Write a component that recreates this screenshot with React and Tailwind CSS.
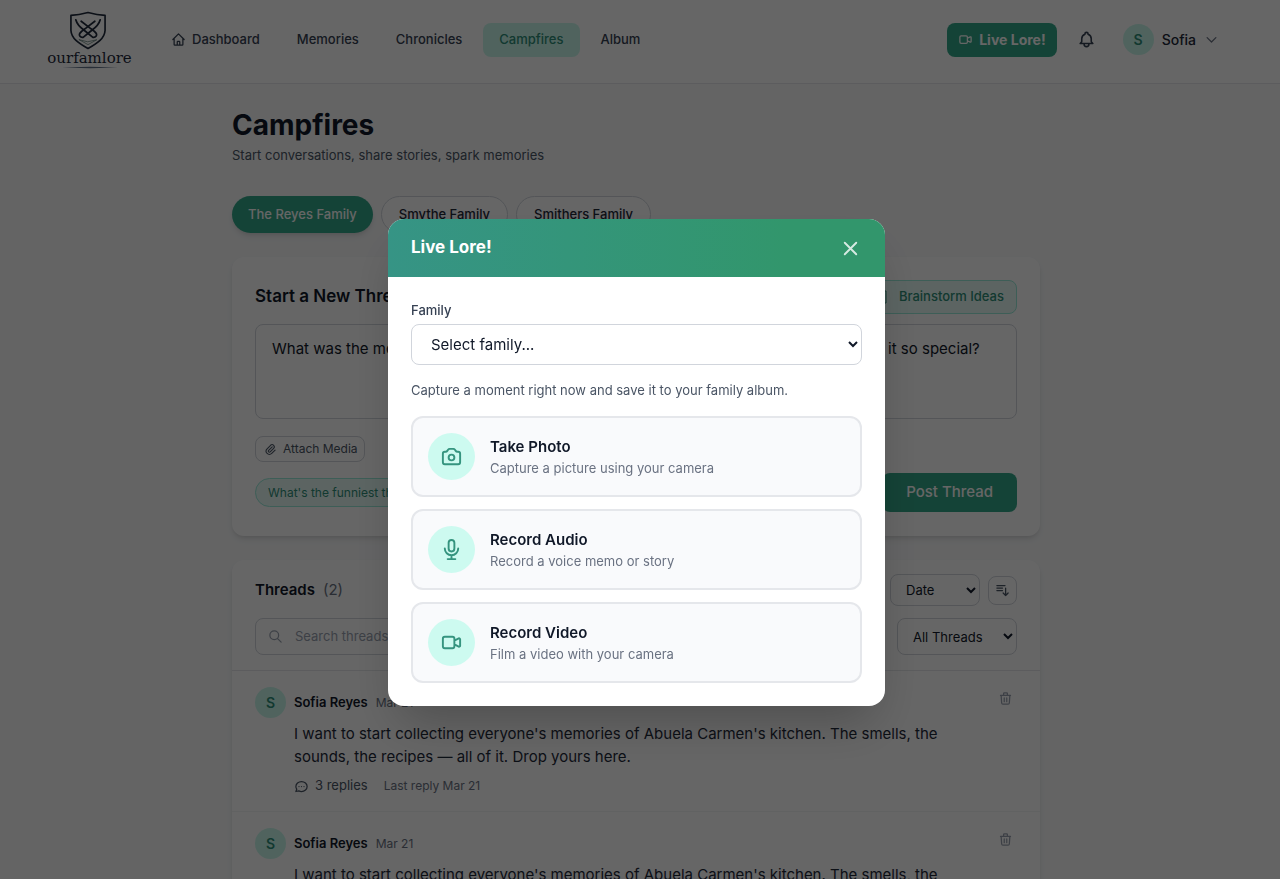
import {
  HiOutlineHome,
  HiOutlineVideoCamera,
  HiOutlineBell,
  HiOutlineChevronDown,
  HiOutlineX,
  HiOutlineCamera,
  HiOutlineMicrophone,
  HiOutlinePaperClip,
  HiOutlineSearch,
  HiOutlineSortDescending,
  HiOutlineTrash,
  HiOutlineChat,
} from "react-icons/hi";

function Logo() {
  return (
    <a href="#" className="flex w-[83px] flex-col items-center text-[#1e293b]">
      <svg viewBox="0 0 38 40" className="mr-1 h-[39px] w-[38px]" fill="none" stroke="currentColor" strokeWidth="1.7" strokeLinecap="round" strokeLinejoin="round" aria-hidden="true">
        <path d="M1.500 4.500C8 4 13 3 19 1.500C25 3 30 4 36.500 4.500V20C36 28 29 33 19 38.500C9 33 2 28 1.500 20Z" />
        <path d="M6.500 9C8 15 12 17.500 16 20.500L24 27C27 27.500 28.500 25 27.500 23C26 20.500 23 19 20.500 17L12 10.500" strokeWidth="1.8" />
        <path d="M31.500 9C30 15 26 17.500 22 20.500L14 27C11 27.500 9.500 25 10.500 23C12 20.500 15 19 17.500 17L26 10.500" strokeWidth="1.8" />
        <path d="M10 29.500L19 34.500L28 29.500L19 31.500Z" strokeWidth="0.7" stroke="#52726c" />
      </svg>
      <span className="font-['DejaVu_Serif',serif] text-[15px] leading-4">ourfamlore</span>
      <svg viewBox="0 0 56 3" className="h-[3px] w-14" aria-hidden="true">
        <path d="M0 1.500L28 0.800L56 1.500L28 2.200Z" fill="#64748b" />
      </svg>
    </a>
  );
}

function NavLink({ icon, active, children }) {
  return (
    <a
      href="#"
      className={
        active
          ? "flex h-[34px] items-center gap-1.5 rounded-lg bg-[#c8f8ec] px-4 text-[#2f8f78]"
          : "flex h-[34px] items-center gap-1.5 rounded-lg px-4 text-gray-700"
      }
    >
      {icon}
      {children}
    </a>
  );
}

function Header() {
  return (
    <header className="border-b border-gray-200 bg-white">
      <div className="flex h-[83px] items-center justify-between pr-[61px] pb-1 pl-12">
        <div className="flex items-center gap-6">
          <Logo />
          <nav className="flex items-center gap-[5px] text-[13px] font-medium">
            <NavLink icon={<HiOutlineHome className="size-[15px]" />}>Dashboard</NavLink>
            <NavLink>Memories</NavLink>
            <NavLink>Chronicles</NavLink>
            <NavLink active>Campfires</NavLink>
            <NavLink>Album</NavLink>
          </nav>
        </div>
        <div className="flex items-center">
          <button className="flex h-[34px] items-center gap-1.5 rounded-lg bg-[#34a88a] px-[11px] text-[14px] font-bold text-white">
            <HiOutlineVideoCamera className="size-[15px]" />
            Live Lore!
          </button>
          <button aria-label="Notifications" className="ml-5 text-gray-700">
            <HiOutlineBell className="size-[19px]" />
          </button>
          <button className="ml-[27px] flex items-center gap-2 text-[14px] font-medium text-gray-800">
            <Avatar />
            Sofia
            <HiOutlineChevronDown className="size-[15px] text-gray-500" />
          </button>
        </div>
      </div>
    </header>
  );
}

function Avatar() {
  return (
    <span className="flex size-[31px] shrink-0 items-center justify-center rounded-full bg-[#c8f8ec] text-[14px] font-semibold text-[#2f8f78]">
      S
    </span>
  );
}

function Composer() {
  return (
    <section className="mt-6 rounded-xl bg-white px-[23px] pt-[23px] pb-6 shadow-md">
      <div className="flex items-center justify-between">
        <h2 className="text-[17px] font-semibold text-gray-900">Start a New Thread</h2>
        <button className="flex h-[34px] items-center gap-3 rounded-lg border border-[#99ead9] bg-[#e6fbf6] px-3 text-[13px] font-medium text-[#2f8f78]">
          <svg viewBox="0 0 10 14" className="h-[14px] w-[10px]" fill="none" stroke="currentColor" aria-hidden="true">
            <path d="M1 1H9V13H1Z" />
          </svg>
          Brainstorm Ideas
        </button>
      </div>
      <textarea
        aria-label="New thread"
        className="mt-[10px] block h-[95px] w-full resize-none rounded-lg border border-gray-300 px-4 py-3 text-[15px] leading-6 text-gray-900"
        defaultValue="What was the most memorable vacation your family ever experienced, and what made it so special?"
      />
      <button className="mt-[17px] flex h-[26px] items-center gap-1.5 rounded-lg border border-gray-300 pr-1.5 pl-2 text-[12px] text-gray-600">
        <HiOutlinePaperClip className="size-[13px]" />
        Attach Media
      </button>
      <div className="mt-[11px] flex h-[39px] items-center justify-between">
        <button className="h-[29px] rounded-full border border-[#99ead9] bg-[#e6fbf6] px-3 text-[12px] text-[#2f8f78]">
          What's the funniest thing that happened?
        </button>
        <button className="h-[39px] rounded-lg bg-[#34a88a] px-6 text-[15px] font-medium text-white">Post Thread</button>
      </div>
    </section>
  );
}

function Thread() {
  return (
    <article className="flex h-[141px] items-start gap-2 border-b border-gray-100 px-[23px] pt-4">
      <Avatar />
      <div className="min-w-0 flex-1">
        <div className="flex h-[31px] items-center gap-2">
          <h3 className="text-[13px] font-semibold text-gray-900">Sofia Reyes</h3>
          <time className="text-[12px] text-gray-500">Mar 21</time>
        </div>
        <p className="mt-1 max-w-[660px] text-[15px] leading-[23px] text-gray-800">
          I want to start collecting everyone's memories of Abuela Carmen's kitchen. The smells, the sounds, the recipes — all of it. Drop yours here.
        </p>
        <div className="mt-2 flex h-5 items-center gap-4">
          <button className="flex items-center gap-1.5 text-[13px] text-gray-600">
            <HiOutlineChat className="size-[15px]" />
            3 replies
          </button>
          <span className="text-[12px] text-gray-500">Last reply Mar 21</span>
        </div>
      </div>
      <button aria-label="Delete thread" className="mt-1 mr-1 text-gray-400">
        <HiOutlineTrash className="size-[15px]" />
      </button>
    </article>
  );
}

function Threads() {
  return (
    <section className="mt-6 rounded-xl bg-white shadow-md">
      <div className="border-b border-gray-200 px-[23px] pt-[14px] pb-[15px]">
        <div className="flex items-center justify-between">
          <h2 className="flex items-center gap-2 text-[15px] font-semibold text-gray-900">
            Threads <span className="font-normal text-gray-500">(2)</span>
          </h2>
          <div className="flex items-center gap-2">
            <select aria-label="Sort by" className="h-8 w-[90px] rounded-lg border border-gray-300 bg-white px-[11px] text-[13px] text-gray-900">
              <option>Date</option>
            </select>
            <button aria-label="Sort descending" className="flex size-[29px] items-center justify-center rounded-lg border border-gray-300 text-gray-600">
              <HiOutlineSortDescending className="size-[15px]" />
            </button>
          </div>
        </div>
        <div className="mt-3 flex gap-3">
          <label className="flex h-[37px] flex-1 items-center gap-3 rounded-lg border border-gray-300 px-3 text-gray-400">
            <HiOutlineSearch className="size-[15px]" />
            <input type="search" aria-label="Search threads" placeholder="Search threads..." className="min-w-0 flex-1 bg-transparent text-[13px] outline-none placeholder:text-gray-400" />
          </label>
          <select aria-label="Filter threads" className="h-[37px] w-[120px] rounded-lg border border-gray-300 bg-white px-[11px] text-[13px] text-gray-900">
            <option>All Threads</option>
          </select>
        </div>
      </div>
      <Thread />
      <Thread />
    </section>
  );
}

function Action({ icon, title, text }) {
  return (
    <button className="flex h-[81px] w-full items-center gap-[15px] rounded-xl border-2 border-gray-200 bg-[#f9fafc] px-[15px] text-left">
      <span className="flex size-[47px] shrink-0 items-center justify-center rounded-full bg-[#cdfaf0] text-[#35947f]">{icon}</span>
      <span className="flex flex-col">
        <span className="text-[15px] leading-[22px] font-semibold text-gray-900">{title}</span>
        <span className="text-[13px] leading-5 text-gray-500">{text}</span>
      </span>
    </button>
  );
}

function LiveLoreDialog() {
  return (
    <div className="fixed inset-0 flex items-start justify-center overflow-hidden bg-black/60 pt-[219px] pr-[7px]">
      <div role="dialog" aria-modal="true" aria-labelledby="dialog-title" className="w-full max-w-[497px] overflow-hidden rounded-2xl bg-white shadow-2xl">
        <div className="flex h-[58px] items-center justify-between bg-linear-to-r from-[#369485] to-[#32966c] to-80% px-[23px] text-white">
          <h2 id="dialog-title" className="text-[17px] font-bold">Live Lore!</h2>
          <button aria-label="Close" className="text-white/80">
            <HiOutlineX className="size-[23px]" />
          </button>
        </div>
        <div className="p-[23px]">
          <label htmlFor="family" className="block text-[13px] leading-5 font-medium text-gray-700">Family</label>
          <select id="family" className="mt-1 block h-[41px] w-full rounded-lg border border-gray-300 bg-white px-[15px] text-[15px] text-gray-900">
            <option>Select family...</option>
          </select>
          <p className="mt-[15px] text-[13px] leading-5 text-gray-600">Capture a moment right now and save it to your family album.</p>
          <div className="mt-4 flex flex-col gap-3">
            <Action icon={<HiOutlineCamera className="size-[23px]" />} title="Take Photo" text="Capture a picture using your camera" />
            <Action icon={<HiOutlineMicrophone className="size-[23px]" />} title="Record Audio" text="Record a voice memo or story" />
            <Action icon={<HiOutlineVideoCamera className="size-[23px]" />} title="Record Video" text="Film a video with your camera" />
          </div>
        </div>
      </div>
    </div>
  );
}

export default function App() {
  return (
    <div className="h-screen overflow-hidden bg-gray-50 font-['Inter',sans-serif]">
      <Header />
      <div className="pr-2">
        <main className="mx-auto w-full max-w-[808px] pt-6">
          <h1 className="text-[28px] leading-[35px] font-bold text-gray-900">Campfires</h1>
          <p className="mt-[2px] text-[13px] leading-5 text-gray-600">Start conversations, share stories, spark memories</p>
          <div className="mt-[31px] flex gap-2 text-[13px] font-medium">
            <button className="h-[37px] rounded-full bg-[#34a88a] px-4 text-white shadow-md">The Reyes Family</button>
            <button className="h-[37px] rounded-full border border-gray-300 bg-white px-[17px] text-gray-800">Smythe Family</button>
            <button className="h-[37px] rounded-full border border-gray-300 bg-white px-[17px] text-gray-800">Smithers Family</button>
          </div>
          <Composer />
          <Threads />
        </main>
      </div>
      <LiveLoreDialog />
    </div>
  );
}
